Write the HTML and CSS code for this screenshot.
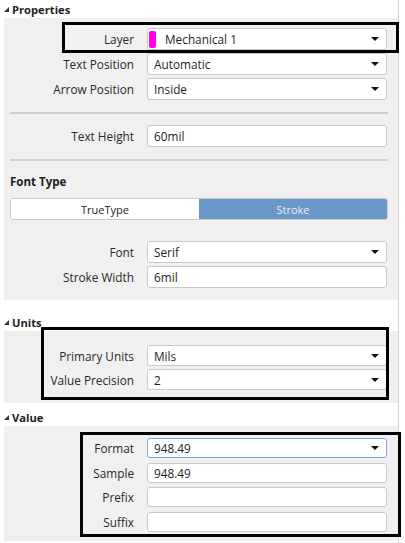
FILE: index.html
```html
<!doctype html>
<html lang="en">
 <head>
  <meta charset="UTF-8">
  <meta name="viewport" content="width=device-width, initial-scale=1.0">
  <title>Properties</title>
  <link rel="stylesheet" href="styles.css">
 </head>
 <body>
  <div class="page">

   <div class="head"><svg class="tri" width="6" height="6" viewBox="0 0 6 6"><polygon points="6,0 6,6 0,6"/></svg>Properties</div>
   <div class="panel props">
    <div class="row">
     <label>Layer</label>
     <div class="field select"><span class="swatch"></span>Mechanical 1<svg class="caret" width="8" height="4" viewBox="0 0 8 4"><polygon points="0,0 8,0 4,4"/></svg></div>
    </div>
    <div class="row">
     <label>Text Position</label>
     <div class="field select">Automatic<svg class="caret" width="8" height="4" viewBox="0 0 8 4"><polygon points="0,0 8,0 4,4"/></svg></div>
    </div>
    <div class="row">
     <label>Arrow Position</label>
     <div class="field select">Inside<svg class="caret" width="8" height="4" viewBox="0 0 8 4"><polygon points="0,0 8,0 4,4"/></svg></div>
    </div>
    <div class="sep"></div>
    <div class="row">
     <label>Text Height</label>
     <div class="field">60mil</div>
    </div>
    <div class="sep"></div>
    <div class="subhead">Font Type</div>
    <div class="toggle">
     <span class="opt">TrueType</span>
     <span class="opt active">Stroke</span>
    </div>
    <div class="row font-row">
     <label>Font</label>
     <div class="field select">Serif<svg class="caret" width="8" height="4" viewBox="0 0 8 4"><polygon points="0,0 8,0 4,4"/></svg></div>
    </div>
    <div class="row">
     <label>Stroke Width</label>
     <div class="field">6mil</div>
    </div>
   </div>

   <div class="head units-head"><svg class="tri" width="6" height="6" viewBox="0 0 6 6"><polygon points="6,0 6,6 0,6"/></svg>Units</div>
   <div class="panel units">
    <div class="row">
     <label>Primary Units</label>
     <div class="field select">Mils<svg class="caret" width="8" height="4" viewBox="0 0 8 4"><polygon points="0,0 8,0 4,4"/></svg></div>
    </div>
    <div class="row">
     <label>Value Precision</label>
     <div class="field select">2<svg class="caret" width="8" height="4" viewBox="0 0 8 4"><polygon points="0,0 8,0 4,4"/></svg></div>
    </div>
   </div>

   <div class="head value-head"><svg class="tri" width="6" height="6" viewBox="0 0 6 6"><polygon points="6,0 6,6 0,6"/></svg>Value</div>
   <div class="panel value">
    <div class="row">
     <label>Format</label>
     <div class="field select focus">948.49<svg class="caret" width="8" height="4" viewBox="0 0 8 4"><polygon points="0,0 8,0 4,4"/></svg></div>
    </div>
    <div class="row">
     <label>Sample</label>
     <div class="field">948.49</div>
    </div>
    <div class="row">
     <label>Prefix</label>
     <div class="field"></div>
    </div>
    <div class="row">
     <label>Suffix</label>
     <div class="field"></div>
    </div>
   </div>

   <!-- highlight frames drawn over the panel -->
   <div class="mark mark-layer"></div>
   <div class="mark mark-units"></div>
   <div class="mark mark-value"></div>
  </div>
 </body>
</html>
```

FILE: styles.css
```css
body {
    margin: 0;
    background: #fff;
    font-family: "Open Sans", "Noto Sans", sans-serif;
    font-size: 11px;
    color: #333;
}
.page {
    position: relative;
    width: 394px;
    height: 543px;
    padding-left: 4px;
    border-right: 1px solid #d4d4d4;
}
.head {
    display: flex;
    align-items: center;
    height: 18px;
    font-weight: bold;
    font-size: 11.2px;
    color: #1e1e1e;
}
.head .tri {
    width: 5px;
    height: 5px;
    margin-right: 3px;
    fill: #333;
}
.units-head {
    margin-top: 13px;
}
.value-head {
    margin-top: 5px;
}
.panel {
    background: #f0f0f0;
}
.props {
    padding: 10px 0 12px;
}
.units {
    padding: 14px 0 13px;
}
.value {
    padding: 12px 0 9px;
}
.row {
    display: grid;
    grid-template-columns: 130px 240px;
    column-gap: 13px;
    align-items: center;
    height: 22px;
    font-size: 11.8px;
}
.row + .row {
    margin-top: 3px;
}
.units .row {
    height: 21px;
}
.value .row {
    height: 20px;
}
.value .row + .row {
    margin-top: 4.5px;
}
.row label {
    text-align: right;
    color: #2a2a2a;
}
.field {
    box-sizing: border-box;
    height: 100%;
    display: flex;
    align-items: center;
    padding: 0 6px;
    background: #fff;
    border: 1px solid #cacaca;
    border-radius: 3px;
    color: #1e1e1e;
}
.field.focus {
    border-color: #7fa9d8;
}
.select .caret {
    margin-left: auto;
    margin-right: 1px;
    fill: #111;
}
.swatch {
    width: 7px;
    height: 17px;
    margin: 0 9px 0 -5px;
    background: #ff00f0;
    border-radius: 2px;
}
.sep {
    height: 2px;
    margin: 12px 10px 11px 6px;
    background: #cfcfcf;
}
.subhead {
    margin: 12px 0 7px 6px;
    height: 18px;
    line-height: 18px;
    font-weight: bold;
    font-size: 11.5px;
    color: #1e1e1e;
}
.toggle {
    display: flex;
    height: 22px;
    margin: 0 10px 0 6px;
    border: 1px solid #cacaca;
    border-radius: 3px;
    overflow: hidden;
    box-sizing: border-box;
}
.toggle .opt {
    flex: 1;
    display: flex;
    align-items: center;
    justify-content: center;
    background: #fff;
    color: #1e1e1e;
}
.toggle .opt.active {
    background: #6a98c9;
    color: #e9eef5;
}
.font-row {
    margin-top: 21px;
}
.mark {
    position: absolute;
    border: 3px solid #000;
    box-sizing: border-box;
}
.mark-layer {
    left: 62px;
    top: 22px;
    width: 337px;
    height: 31px;
}
.mark-units {
    left: 41px;
    top: 327px;
    width: 348px;
    height: 73px;
}
.mark-value {
    left: 80px;
    top: 432px;
    width: 321px;
    height: 105px;
}
```
